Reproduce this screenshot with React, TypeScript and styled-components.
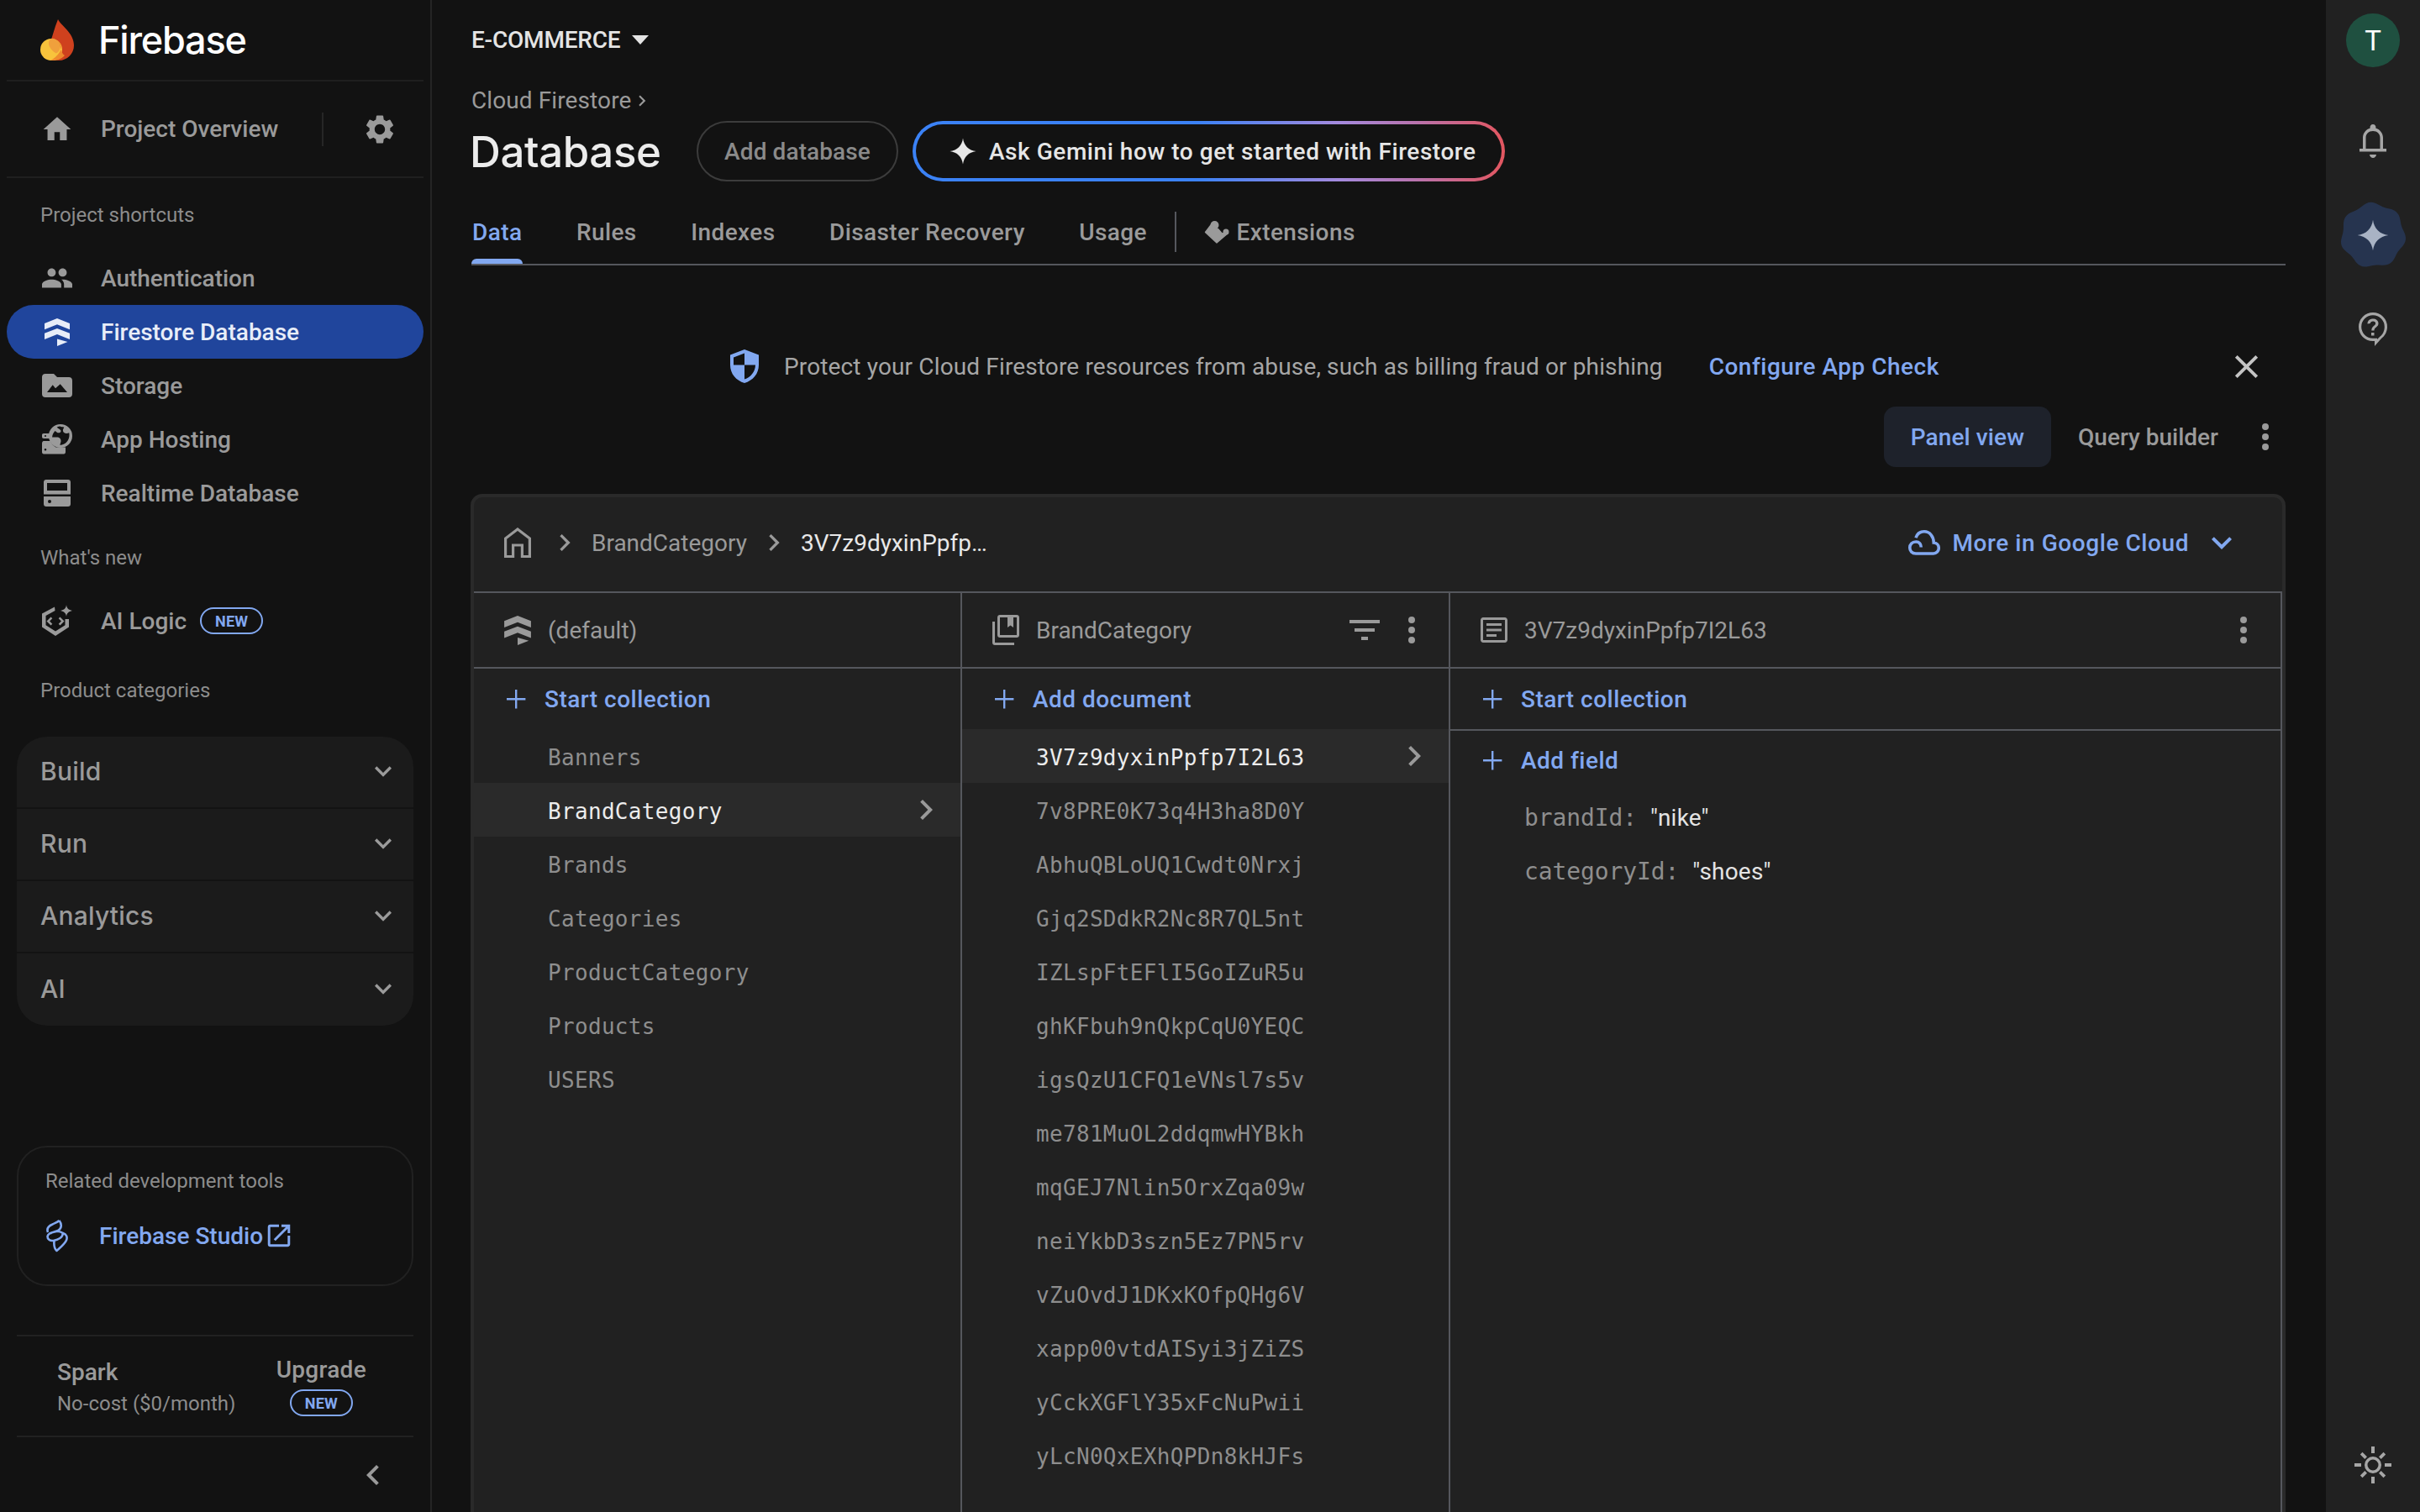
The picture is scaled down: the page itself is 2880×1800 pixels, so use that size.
import styled, { createGlobalStyle } from "styled-components";

const GlobalStyle = createGlobalStyle`
    html, body {
        margin: 0;
        padding: 0;
        background: #121212;
    }
    * {
        box-sizing: border-box;
    }
    body {
        font-family: Roboto, "Liberation Sans", sans-serif;
    }
`;

const BLUE = "#82a8f0";
const GREY = "#9a9a9a";
const LINE = "#55575d";
const MONO = `"DejaVu Sans Mono", "Liberation Mono", monospace`;

const Page = styled.div`
    display: flex;
    width: 2880px;
    height: 1800px;
    overflow: hidden;
    background: #121212;
`;

const Svg = styled.svg<{ $w: number; $h?: number; $c?: string }>`
    display: block;
    flex: none;
    width: ${(p) => p.$w}px;
    height: ${(p) => p.$h ?? p.$w}px;
    color: ${(p) => p.$c ?? GREY};
    fill: currentColor;
`;

/* sidebar */
const Sidebar = styled.aside`
    display: flex;
    flex-direction: column;
    flex: none;
    width: 514px;
    height: 100%;
    border-right: 2px solid #242424;
`;

const LogoRow = styled.div`
    display: flex;
    align-items: center;
    gap: 29px;
    height: 97px;
    margin: 0 8px;
    padding-left: 40px;
    border-bottom: 2px solid #1f1f1f;
`;

const LogoText = styled.span`
    font-family: Inter, sans-serif;
    font-size: 45px;
    font-weight: 500;
    letter-spacing: -1.2px;
    color: #fff;
`;

const OverviewRow = styled.div`
    display: flex;
    align-items: center;
    height: 115px;
    margin: 0 8px;
    padding-left: 42px;
    border-bottom: 2px solid #1f1f1f;
`;

const OverviewText = styled.span`
    width: 263px;
    margin-left: 34px;
    font-size: 28px;
    font-weight: 500;
    color: ${GREY};
`;

const VSep = styled.div`
    width: 2px;
    height: 40px;
    background: #262626;
`;

const GearBox = styled.div`
    margin-left: 49px;
`;

const SectionLabel = styled.div<{ $h: number }>`
    display: flex;
    align-items: center;
    flex: none;
    height: ${(p) => p.$h}px;
    padding-left: 48px;
    font-size: 24px;
    color: #8c8c8c;
`;

const NavRow = styled.div<{ $active?: boolean; $h?: number }>`
    display: flex;
    align-items: center;
    gap: 34px;
    flex: none;
    height: ${(p) => p.$h ?? 64}px;
    margin: 0 8px;
    padding-left: 42px;
    border-radius: 32px;
    background: ${(p) => (p.$active ? "#20459c" : "transparent")};
    color: ${(p) => (p.$active ? "#e8edf8" : GREY)};
    font-size: 28px;
    font-weight: 500;
`;

const NavIcon = styled.span`
    display: flex;
    align-items: center;
    justify-content: center;
    flex: none;
    width: 36px;
`;

const NewBadge = styled.span`
    display: flex;
    align-items: center;
    justify-content: center;
    width: 75px;
    height: 32px;
    border: 2px solid ${BLUE};
    border-radius: 16px;
    color: ${BLUE};
    font-size: 18px;
    font-weight: 700;
    letter-spacing: 0.2px;
`;

const AiRowLabel = styled.span`
    display: flex;
    align-items: center;
    gap: 16px;
`;

const Accordion = styled.div`
    flex: none;
    margin: 2px 20px 0;
    border-radius: 36px;
    background: #1b1b1b;
    overflow: hidden;
`;

const AccordionRow = styled.div`
    display: flex;
    align-items: center;
    justify-content: space-between;
    height: 86px;
    padding: 0 16px 3px 28px;
    border-bottom: 2px solid #131313;
    font-family: Inter, sans-serif;
    font-size: 30px;
    font-weight: 500;
    letter-spacing: 0.2px;
    color: ${GREY};
    &:last-child {
        border-bottom: 0;
    }
`;

const ToolsCard = styled.div`
    display: flex;
    flex-direction: column;
    flex: none;
    height: 167px;
    margin: auto 20px 58px;
    padding: 25px 32px 0;
    border: 2px solid #212121;
    border-radius: 36px;
`;

const ToolsLabel = styled.div`
    font-size: 24px;
    line-height: 30px;
    color: #8c8c8c;
`;

const ToolsLink = styled.div`
    display: flex;
    align-items: center;
    margin-top: 30px;
    color: ${BLUE};
    font-size: 28px;
    font-weight: 500;
`;

const StudioText = styled.span`
    margin: 0 5px 0 36px;
`;

const PlanRow = styled.div`
    display: flex;
    justify-content: space-between;
    flex: none;
    height: 122px;
    margin: 0 20px;
    padding: 21px 56px 0 48px;
    border-top: 2px solid #212121;
    border-bottom: 2px solid #212121;
`;

const PlanName = styled.div`
    margin-top: 2px;
    font-size: 28px;
    line-height: 40px;
    font-weight: 500;
    color: ${GREY};
`;

const PlanCost = styled.div`
    font-size: 24px;
    line-height: 34px;
    color: #8c8c8c;
`;

const UpgradeBox = styled.div`
    display: flex;
    flex-direction: column;
    align-items: center;
    gap: 5px;
    margin-top: 1px;
`;

const UpgradeText = styled.div`
    font-size: 28px;
    line-height: 36px;
    font-weight: 500;
    letter-spacing: 0.3px;
    color: ${GREY};
`;

const CollapseRow = styled.div`
    display: flex;
    justify-content: flex-end;
    align-items: center;
    flex: none;
    height: 89px;
    padding-right: 44px;
`;

/* main */
const Main = styled.main`
    display: flex;
    flex-direction: column;
    flex: 1;
    min-width: 0;
    height: 100%;
    padding: 0 48px 0 47px;
`;

const ProjectRow = styled.div`
    display: flex;
    align-items: center;
    gap: 14px;
    flex: none;
    height: 95px;
    font-size: 28px;
    font-weight: 500;
    letter-spacing: -0.2px;
    color: #e4e4e4;
`;

const Caret = styled.span`
    width: 0;
    height: 0;
    border-left: 10px solid transparent;
    border-right: 10px solid transparent;
    border-top: 11px solid #e4e4e4;
`;

const Crumb = styled.div`
    display: flex;
    align-items: center;
    flex: none;
    height: 49px;
    font-size: 28px;
    letter-spacing: 0.1px;
    color: ${GREY};
`;

const TitleRow = styled.div`
    display: flex;
    align-items: center;
    flex: none;
    height: 72px;
`;

const Title = styled.h1`
    width: 268px;
    margin: 0 0 0 -2px;
    font-family: Inter, sans-serif;
    font-size: 51px;
    font-weight: 500;
    letter-spacing: -0.4px;
    color: #ececec;
`;

const OutlineButton = styled.div`
    display: flex;
    align-items: center;
    justify-content: center;
    width: 240px;
    height: 72px;
    margin-left: 2px;
    border: 2px solid #3c3c3c;
    border-radius: 36px;
    font-size: 28px;
    font-weight: 500;
    letter-spacing: 0.1px;
    color: #8a8a8a;
`;

const GeminiButton = styled.div`
    display: flex;
    align-items: center;
    gap: 14px;
    height: 72px;
    width: 705px;
    margin-left: 17px;
    padding-left: 39px;
    border: 4px solid transparent;
    border-radius: 36px;
    background:
        linear-gradient(#121212, #121212) padding-box,
        linear-gradient(90deg, #3b82f6 0%, #3b82f6 48%, #a48add 72%, #b873ad 85%, #e3565f 100%) border-box;
    font-size: 28px;
    font-weight: 500;
    letter-spacing: 0.55px;
    color: #e6e6e6;
`;

const TabBar = styled.div`
    display: flex;
    align-items: flex-end;
    flex: none;
    height: 100px;
    border-bottom: 2px solid ${LINE};
`;

const Tab = styled.div<{ $active?: boolean }>`
    position: relative;
    display: flex;
    align-items: center;
    gap: 8px;
    height: 76px;
    padding: 0 1px;
    margin-right: 62.5px;
    font-size: 28px;
    font-weight: 500;
    letter-spacing: 0.4px;
    color: ${(p) => (p.$active ? BLUE : GREY)};
    &::after {
        content: "";
        display: ${(p) => (p.$active ? "block" : "none")};
        position: absolute;
        left: 0;
        right: 0;
        bottom: 0;
        height: 6px;
        border-radius: 6px 6px 0 0;
        background: ${BLUE};
    }
`;

const TabSep = styled.div`
    width: 2px;
    height: 48px;
    margin: 0 32px 14px -30px;
    background: ${LINE};
`;

const Banner = styled.div`
    display: flex;
    align-items: center;
    flex: none;
    height: 80px;
    margin-top: 80px;
    padding: 0 29px 0 308px;
    font-size: 28px;
    letter-spacing: 0.14px;
    color: #a6a6a6;
`;

const BannerText = styled.span`
    margin-left: 30px;
`;

const BannerLink = styled.span`
    margin-left: 55px;
    font-weight: 500;
    letter-spacing: 0.5px;
    color: ${BLUE};
`;

const BannerClose = styled.div`
    margin-left: auto;
`;

const Toolbar = styled.div`
    display: flex;
    justify-content: flex-end;
    align-items: center;
    flex: none;
    height: 72px;
    margin-top: 8px;
`;

const ViewButton = styled.div<{ $active?: boolean }>`
    display: flex;
    align-items: center;
    height: 72px;
    padding: 0 32px;
    border-radius: 14px;
    background: ${(p) => (p.$active ? "#1e222b" : "transparent")};
    color: ${(p) => (p.$active ? BLUE : GREY)};
    font-size: 28px;
    font-weight: 500;
    letter-spacing: ${(p) => (p.$active ? "0.1px" : "0")};
`;

const Card = styled.section`
    display: flex;
    flex-direction: column;
    flex: 1;
    min-height: 0;
    margin: 32px 0 0 -1px;
    border: 4px solid #2a2a2a;
    border-bottom: 0;
    border-radius: 14px 14px 0 0;
    background: #212121;
`;

const CardBar = styled.div`
    display: flex;
    align-items: center;
    flex: none;
    height: 114px;
    padding: 0 48px 4px 36px;
    border-bottom: 2px solid ${LINE};
`;

const BarCrumb = styled.span<{ $current?: boolean }>`
    font-size: 28px;
    color: ${(p) => (p.$current ? "#e8e8e8" : GREY)};
`;

const BarChevron = styled.span`
    margin: 0 12px;
    &:first-of-type {
        margin-left: 20px;
    }
`;

const CloudLink = styled.div`
    display: flex;
    align-items: center;
    margin-left: auto;
    color: ${BLUE};
    font-size: 28px;
    font-weight: 500;
    letter-spacing: 0.57px;
`;

const CloudText = styled.span`
    margin: 0 15px 0 14px;
`;

const Columns = styled.div`
    display: grid;
    grid-template-columns: 581px 581px 1fr;
    flex: 1;
    min-height: 0;
    border-right: 2px solid ${LINE};
`;

const Column = styled.div`
    display: flex;
    flex-direction: column;
    min-width: 0;
    border-right: 2px solid ${LINE};
    &:last-child {
        border-right: 0;
    }
`;

const ColHeader = styled.div`
    display: flex;
    align-items: center;
    gap: 20px;
    flex: none;
    height: 90px;
    padding: 0 20px 0 36px;
    border-bottom: 2px solid ${LINE};
    font-size: 28px;
    color: ${GREY};
`;

const HeaderActions = styled.div`
    display: flex;
    gap: 8px;
    margin-left: auto;
`;

const ActionRow = styled.div<{ $line?: boolean; $h: number }>`
    display: flex;
    align-items: center;
    gap: 20px;
    flex: none;
    height: ${(p) => p.$h}px;
    padding-left: 36px;
    border-bottom: ${(p) => (p.$line ? `2px solid ${LINE}` : "0")};
    color: ${BLUE};
    font-size: 28px;
    font-weight: 500;
    letter-spacing: 0.48px;
`;

const DocRow = styled.div<{ $active?: boolean }>`
    display: flex;
    align-items: center;
    justify-content: space-between;
    flex: none;
    height: 64px;
    padding: 4px 17px 0 88px;
    background: ${(p) => (p.$active ? "#2a2a2a" : "transparent")};
    color: ${(p) => (p.$active ? "#ececec" : "#8e8e8e")};
    font-family: ${MONO};
    font-size: 26px;
    letter-spacing: 0.32px;
`;

const RowChevron = styled.span`
    margin-top: -4px;
`;

const FieldRow = styled.div`
    display: flex;
    align-items: center;
    gap: 16px;
    flex: none;
    height: 64px;
    padding-left: 88px;
`;

const FieldKey = styled.span`
    font-family: ${MONO};
    font-size: 28px;
    letter-spacing: -0.1px;
    color: #8e8e8e;
`;

const FieldValue = styled.span`
    font-size: 28px;
    letter-spacing: 0.2px;
    color: #e4e4e4;
`;

const FieldSpacer = styled.div`
    flex: none;
    height: 1px;
`;

/* right rail */
const Rail = styled.aside`
    display: flex;
    flex-direction: column;
    align-items: center;
    flex: none;
    width: 112px;
    height: 100%;
    background: #212121;
`;

const Avatar = styled.div`
    display: flex;
    align-items: center;
    justify-content: center;
    width: 64px;
    height: 64px;
    margin: 16px 0 32px;
    border-radius: 50%;
    background: #1f5040;
    color: #fff;
    font-size: 33px;
`;

const RailCell = styled.div<{ $bottom?: boolean }>`
    display: flex;
    align-items: center;
    justify-content: center;
    width: 112px;
    height: 112px;
    margin-top: ${(p) => (p.$bottom ? "auto" : "0")};
`;

const GeminiBadge = styled.div`
    position: relative;
    display: flex;
    align-items: center;
    justify-content: center;
    width: 80px;
    height: 80px;
`;

const BlobLayer = styled.div`
    position: absolute;
    inset: 0;
`;

const StarLayer = styled.div`
    position: relative;
`;

const paths = {
    home: "M10 20v-6h4v6h5v-8h3L12 3 2 12h3v8z",
    gear: "M19.14 12.94c.04-.3.06-.61.06-.94 0-.32-.02-.64-.07-.94l2.03-1.58a.49.49 0 0 0 .12-.61l-1.92-3.32a.488.488 0 0 0-.59-.22l-2.39.96c-.5-.38-1.03-.7-1.62-.94l-.36-2.54a.484.484 0 0 0-.48-.41h-3.84c-.24 0-.43.17-.47.41l-.36 2.54c-.59.24-1.13.57-1.62.94l-2.39-.96c-.22-.08-.47 0-.59.22L2.74 8.87c-.12.21-.08.47.12.61l2.03 1.58c-.05.3-.09.63-.09.94s.02.64.07.94l-2.03 1.58a.49.49 0 0 0-.12.61l1.92 3.32c.12.22.37.29.59.22l2.39-.96c.5.38 1.03.7 1.62.94l.36 2.54c.05.24.24.41.48.41h3.84c.24 0 .44-.17.47-.41l.36-2.54c.59-.24 1.13-.56 1.62-.94l2.39.96c.22.08.47 0 .59-.22l1.92-3.32c.12-.22.07-.47-.12-.61l-2.01-1.58zM12 15.6c-1.98 0-3.6-1.62-3.6-3.6s1.62-3.6 3.6-3.6 3.6 1.62 3.6 3.6-1.62 3.6-3.6 3.6z",
    people: "M16 11c1.66 0 2.99-1.34 2.99-3S17.66 5 16 5s-3 1.34-3 3 1.34 3 3 3zm-8 0c1.66 0 2.99-1.34 2.99-3S9.66 5 8 5 5 6.34 5 8s1.34 3 3 3zm0 2c-2.33 0-7 1.17-7 3.5V19h14v-2.5C15 14.17 10.33 13 8 13zm8 0c-.29 0-.62.02-.97.05 1.16.84 1.97 1.97 1.97 3.45V19h6v-2.5c0-2.33-4.67-3.5-7-3.5z",
    down: "M16.59 8.59 12 13.17 7.41 8.59 6 10l6 6 6-6z",
    right: "M10 6 8.59 7.41 13.17 12l-4.58 4.59L10 18l6-6z",
    left: "M15.41 7.41 14 6l-6 6 6 6 1.41-1.41L10.83 12z",
    external: "M19 19H5V5h7V3H5a2 2 0 0 0-2 2v14a2 2 0 0 0 2 2h14c1.100 0 2-.9 2-2v-7h-2v7zM14 3v2h3.590l-9.830 9.830 1.410 1.410L19 6.410V10h2V3h-7z",
    close: "M19 6.410 17.590 5 12 10.590 6.410 5 5 6.410 10.590 12 5 17.590 6.410 19 12 13.410 17.590 19 19 17.590 13.410 12z",
    kebab: "M12 8a2 2 0 1 0 0-4 2 2 0 0 0 0 4zm0 2a2 2 0 1 0 0 4 2 2 0 0 0 0-4zm0 6a2 2 0 1 0 0 4 2 2 0 0 0 0-4z",
    filter: "M10 18h4v-2h-4v2zM3 6v2h18V6H3zm3 7h12v-2H6v2z",
    spark: "M12 1c.8 6.200 4.800 10.200 11 11-6.200.8-10.200 4.800-11 11-.8-6.200-4.800-10.200-11-11 6.200-.8 10.200-4.800 11-11z",
};

const Glyph = ({ d, w, h, c, vb }: { d: string; w: number; h?: number; c?: string; vb?: string }) => (
    <Svg $w={w} $h={h} $c={c} viewBox={vb ?? "0 0 24 24"} aria-hidden="true">
        <path d={d} fillRule="evenodd" />
    </Svg>
);

const FirebaseLogo = () => (
    <Svg $w={40} $h={49} viewBox="0 0 40 49">
        <path d="M21 0c3 7 19 16 19 31 0 10-8 18-18 18-7 0-12-3-14-9L18 8z" fill="#cf411e" />
        <circle cx="13" cy="36" r="13" fill="#f8c33c" />
        <path d="M19 24.500c5 2.500 8 8.500 4 14.500-3 4.500-7 8-11 10 7 1 14-2 17-6-5-3-4-11-10-18.500z" fill="#ee8a2c" />
        <path d="M13 23c4-1 9.500 3 10.500 8 .7 4-1.500 8-4.500 9.500-5-2.500-9-7.500-9-12 0-2.500 1-4.500 3-5.500z" fill="#f0a03c" />
    </Svg>
);

const FirestoreIcon = ({ w, h, c }: { w: number; h: number; c: string }) => (
    <Svg $w={w} $h={h} $c={c} viewBox="0 0 30 33">
        <path d="M15 0l15 6v7.300L15 7.200 0 13.300V6z" />
        <path d="M15 12l15 5.700V25l-15-6-15 6v-7.300z" />
        <path d="M15 24.500l12.500 3.500L15 33z" />
    </Svg>
);

const FolderIcon = () => (
    <Svg $w={36} $h={28} viewBox="0 0 36 28">
        <path
            fillRule="evenodd"
            d="M4 0h10l4 4h14c2.500 0 4 1.500 4 4v16c0 2.500-1.500 4-4 4H4c-2.500 0-4-1.500-4-4V4c0-2.500 1.500-4 4-4zM6 22h24l-8.300-9.700-5.700 5-3.300-4z"
        />
    </Svg>
);

const PuzzleIcon = () => (
    <Svg $w={30} $h={27} viewBox="0 0 30 27">
        <circle cx="12.500" cy="5" r="5" />
        <circle cx="26" cy="13" r="3.500" />
        <path
            stroke="currentColor"
            strokeWidth="1.400"
            strokeLinejoin="round"
            d="M1.500 13.500L8 5l8.500 4.500 4.800 5.500 4.700-1 2.500.5L15 26z"
        />
    </Svg>
);

const HostingIcon = () => (
    <Svg $w={38} $h={36} viewBox="0 0 38 36">
        <path fillRule="evenodd" d="M23 0a14 14 0 1 1 0 28 14 14 0 0 1 0-28zM23 2.500c-1.500 0-3 .3-4.300 .9 1 1.600 3 2 4.300 3.600 1 1.200 .2 3-1.500 3.300-2 .4-3.500-1-5-2.300-2 2-3.300 4.800-3.400 7.500h5.400c3.500 0 5 2 5 4.500 0 1.800-1 2.900-1 4.900 6.200-.4 11-5.500 11-11.900 0-1-.1-1.900-.3-2.800-3 1.600-7.300 .6-7.300-2.700 0-1.500 1-2.600 1.300-3.900-1.300-.4-2.800-.6-4.200-.6z" />
        <path fillRule="evenodd" d="M3 11h9c-1 2-1.400 3.700-1.500 6H3c-1.300 0-2-.8-2-2v-2c0-1.200.7-2 2-2zM5 13a1 1 0 1 0 0 2 1 1 0 0 0 0-2z" />
        <path fillRule="evenodd" d="M3 20h8c1 3 3.500 6 6.500 7.500H29v5.500c0 1.500-.8 2.500-2 2.500H3c-1.300 0-2-1-2-2.500v-10c0-1.500.7-3 2-3zM5 29a1.300 1.300 0 1 0 0 2.600 1.300 1.300 0 0 0 0-2.600z" />
    </Svg>
);

const ServerIcon = () => (
    <Svg $w={32} $h={32} viewBox="0 0 32 32">
        <path fillRule="evenodd" d="M3 0h26c1.800 0 3 1.200 3 3v14.500H0V3c0-1.800 1.200-3 3-3zM4 4v9h24V4z" />
        <path fillRule="evenodd" d="M0 20h32v9c0 1.800-1.200 3-3 3H3c-1.800 0-3-1.200-3-3zM7 24a2 2 0 1 0 0 4 2 2 0 0 0 0-4z" />
    </Svg>
);

const AiLogicIcon = () => (
    <Svg $w={36} $h={38} viewBox="0 0 36 38">
        <path d="M15 2.500L0 10.500v16L16 37l16-10.500V17h-4.500v7.300L16 31.500 4.500 24.300V13l11-6z" />
        <path d="M10.500 14.500l-5 5 5 5 1.800-1.800-3.200-3.200 3.200-3.200zM21.500 14.500l5 5-5 5-1.800-1.800 3.200-3.200-3.200-3.200z" />
        <path d="M29 0c.5 4 2.500 6 7 7-4.500 1-6.500 3-7 7-.5-4-2.500-6-7-7 4.500-1 6.500-3 7-7z" />
    </Svg>
);

const StudioIcon = () => (
    <Svg $w={28} $h={40} $c={BLUE} viewBox="0 0 28 40">
        <path
            fill="none"
            stroke="currentColor"
            strokeWidth="2.600"
            strokeLinejoin="round"
            d="M16.500 2c3 4 3.500 9-1.500 12-5 2.500-12 2-12.500 7 0 3 2.500 5.500 7 5 6-.8 11-4 11.500-9-4-2.500-10-3-15 .5M3 16C1 11 5 8 8.500 6.500 11.500 5 14.500 4 16.500 2M21 17c4 1 5.500 5 4 8.500C23 30 18 34 13.500 38c-3-3-3.500-7-3-11.500"
        />
    </Svg>
);

const ShieldIcon = () => (
    <Svg $w={34} $h={40} $c={BLUE} viewBox="0 0 34 40">
        <path
            fillRule="evenodd"
            d="M17 0l17 6.500v12C34 29 27 37 17 40 7 37 0 29 0 18.500v-12zM17 4.500L4 9.500v9h13zM17 18.500v17c7.500-2.500 12.800-9 13-17z"
        />
    </Svg>
);

const OutlineHome = () => (
    <Svg $w={32} $h={36} $c={GREY} viewBox="0 0 32 36">
        <path
            fill="none"
            stroke="currentColor"
            strokeWidth="3.200"
            d="M1.600 34.500V13L16 2l14.400 11v21.500h-9V21H10.600v13.500z"
        />
    </Svg>
);

const CollectionIcon = () => (
    <Svg $w={32} $h={36} viewBox="0 0 32 36">
        <path
            fillRule="evenodd"
            d="M9 0h20c1.700 0 3 1.300 3 3v21c0 1.700-1.300 3-3 3H9c-1.700 0-3-1.300-3-3V3c0-1.700 1.300-3 3-3zM9 3v21h20V3h-4v12l-3.500-2.500L18 15V3z"
        />
        <path d="M0 8h3v25h23v3H3c-1.700 0-3-1.300-3-3z" />
    </Svg>
);

const DocIcon = () => (
    <Svg $w={32} $h={32} viewBox="0 0 32 32">
        <path
            fillRule="evenodd"
            d="M3 1h26c1.500 0 3 1.500 3 3v24c0 1.500-1.500 3-3 3H3c-1.500 0-3-1.500-3-3V4c0-1.500 1.500-3 3-3zm0 3v24h26V4zM7 8h18v3H7zm0 6.500h18v3H7zM7 21h12v3H7z"
        />
    </Svg>
);

const CloudIcon = () => (
    <Svg $w={38} $h={30} $c={BLUE} viewBox="0 0 38 30">
        <path
            fill="none"
            stroke="currentColor"
            strokeWidth="3.600"
            d="M9 28C4.500 28 1.800 25 1.800 21c0-4 3-7 7-7 4-.5 6.500 3 6.500 6.500M9 28h21c3.500 0 6.300-3 6.300-6.500 0-3.500-2.700-6.300-6-6.500 0-7-4.500-13.200-11.300-13.200-5 0-8.500 3-10 7.500"
        />
    </Svg>
);

const PlusIcon = () => (
    <Svg $w={28} $h={28} $c={BLUE} viewBox="0 0 28 28">
        <path d="M13 3h2.400v10h10v2.400h-10v10H13v-10H3V13h10z" />
    </Svg>
);

const BellIcon = () => (
    <Svg $w={32} $h={40} $c="#a6a6a6" viewBox="0 0 32 40">
        <path d="M16 0a3.500 3.500 0 0 1 3.300 4.600C24 6 28 10.500 28 16v13h4v3.500H0V29h4V16c0-5.500 4-10 8.700-11.400A3.500 3.500 0 0 1 16 0zM16 8c-5 0-8.500 3.500-8.500 8v13h17V16c0-4.500-3.500-8-8.500-8z" fillRule="evenodd" />
        <path d="M12 36h8c0 2-2 4-4 4s-4-2-4-4z" />
    </Svg>
);

const HelpIcon = () => (
    <Svg $w={34} $h={40} $c="#a6a6a6" viewBox="0 0 34 40">
        <path
            fillRule="evenodd"
            d="M17 0a17 17 0 0 1 17 17c0 6-3 11-7 14l-8 9v-6.100C8 35 0 27 0 17A17 17 0 0 1 17 0zm0 3.200A13.800 13.800 0 0 0 3.200 17c0 7.600 6.200 13.800 13.800 13.800h5V32l3-3c3.600-2.500 5.800-7 5.800-12A13.800 13.800 0 0 0 17 3.200z"
        />
        <path d="M10.500 13.500c0-4 3-6 6.500-6s6.500 2 6.500 5.500c0 4.500-5 4.500-5 8.500h-3.200c0-5.500 4.800-5.500 4.800-8.500 0-1.500-1-2.600-3-2.600s-3 1.200-3.300 2.600zM15 24h3.500v3.500H15z" />
    </Svg>
);

const SunIcon = () => (
    <Svg $w={44} $h={44} $c="#a6a6a6" viewBox="0 0 44 44">
        <path fillRule="evenodd" d="M22 12a10 10 0 1 1 0 20 10 10 0 0 1 0-20zm0 3.500a6.500 6.500 0 1 0 0 13 6.500 6.500 0 0 0 0-13z" />
        <path d="M20 0h4v8h-4zM20 36h4v8h-4zM0 20h8v4H0zM36 20h8v4h-8zM6.800 9.500l2.700-2.700 5.500 5.500-2.700 2.700zM29 31.700l2.700-2.700 5.500 5.500-2.700 2.700zM34.500 6.800l2.700 2.700-5.500 5.500-2.700-2.700zM12.300 29l2.700 2.700-5.500 5.500-2.700-2.700z" />
    </Svg>
);

// wavy badge behind the gemini star
const blobPath = Array.from({ length: 96 }, (_, i) => {
    const a = (i / 96) * Math.PI * 2;
    const r = 37.5 + 1.8 * Math.sin(a * 7 + 0.6);
    const x = 40 + r * Math.cos(a);
    const y = 40 + r * Math.sin(a);
    return `${i === 0 ? "M" : "L"}${x.toFixed(2)} ${y.toFixed(2)}`;
}).join(" ");

const collections = ["Banners", "BrandCategory", "Brands", "Categories", "ProductCategory", "Products", "USERS"];

const documents = [
    "3V7z9dyxinPpfp7I2L63",
    "7v8PRE0K73q4H3ha8D0Y",
    "AbhuQBLoUQ1Cwdt0Nrxj",
    "Gjq2SDdkR2Nc8R7QL5nt",
    "IZLspFtEFlI5GoIZuR5u",
    "ghKFbuh9nQkpCqU0YEQC",
    "igsQzU1CFQ1eVNsl7s5v",
    "me781MuOL2ddqmwHYBkh",
    "mqGEJ7Nlin5OrxZqa09w",
    "neiYkbD3szn5Ez7PN5rv",
    "vZuOvdJ1DKxKOfpQHg6V",
    "xapp00vtdAISyi3jZiZS",
    "yCckXGFlY35xFcNuPwii",
    "yLcN0QxEXhQPDn8kHJFs",
];

export default function App() {
    return (
        <Page>
            <GlobalStyle />
            <Sidebar>
                <LogoRow>
                    <FirebaseLogo />
                    <LogoText>Firebase</LogoText>
                </LogoRow>
                <OverviewRow>
                    <Glyph d={paths.home} w={36} vb="1 1 22 22" />
                    <OverviewText>Project Overview</OverviewText>
                    <VSep />
                    <GearBox>
                        <Glyph d={paths.gear} w={36} vb="1.500 1.500 21 21" />
                    </GearBox>
                </OverviewRow>
                <SectionLabel $h={87}>Project shortcuts</SectionLabel>
                <NavRow>
                    <NavIcon>
                        <Glyph d={paths.people} w={36} vb="1 1 22 22" />
                    </NavIcon>
                    Authentication
                </NavRow>
                <NavRow $active>
                    <NavIcon>
                        <FirestoreIcon w={30} h={33} c="#e8edf8" />
                    </NavIcon>
                    Firestore Database
                </NavRow>
                <NavRow>
                    <NavIcon>
                        <FolderIcon />
                    </NavIcon>
                    Storage
                </NavRow>
                <NavRow>
                    <NavIcon>
                        <HostingIcon />
                    </NavIcon>
                    App Hosting
                </NavRow>
                <NavRow>
                    <NavIcon>
                        <ServerIcon />
                    </NavIcon>
                    Realtime Database
                </NavRow>
                <SectionLabel $h={90}>What's new</SectionLabel>
                <NavRow $h={60}>
                    <NavIcon>
                        <AiLogicIcon />
                    </NavIcon>
                    <AiRowLabel>
                        AI Logic
                        <NewBadge>NEW</NewBadge>
                    </AiRowLabel>
                </NavRow>
                <SectionLabel $h={106}>Product categories</SectionLabel>
                <Accordion>
                    {["Build", "Run", "Analytics", "AI"].map((name) => (
                        <AccordionRow key={name}>
                            {name}
                            <Glyph d={paths.down} w={40} />
                        </AccordionRow>
                    ))}
                </Accordion>
                <ToolsCard>
                    <ToolsLabel>Related development tools</ToolsLabel>
                    <ToolsLink>
                        <StudioIcon />
                        <StudioText>Firebase Studio</StudioText>
                        <Glyph d={paths.external} w={28} c={BLUE} vb="2.500 2.500 19 19" />
                    </ToolsLink>
                </ToolsCard>
                <PlanRow>
                    <div>
                        <PlanName>Spark</PlanName>
                        <PlanCost>No-cost ($0/month)</PlanCost>
                    </div>
                    <UpgradeBox>
                        <UpgradeText>Upgrade</UpgradeText>
                        <NewBadge>NEW</NewBadge>
                    </UpgradeBox>
                </PlanRow>
                <CollapseRow>
                    <Glyph d={paths.left} w={48} />
                </CollapseRow>
            </Sidebar>
            <Main>
                <ProjectRow>
                    E-COMMERCE
                    <Caret />
                </ProjectRow>
                <Crumb>
                    Cloud Firestore
                    <Glyph d={paths.right} w={26} />
                </Crumb>
                <TitleRow>
                    <Title>Database</Title>
                    <OutlineButton>Add database</OutlineButton>
                    <GeminiButton>
                        <Glyph d={paths.spark} w={34} c="#e8e8e8" />
                        Ask Gemini how to get started with Firestore
                    </GeminiButton>
                </TitleRow>
                <TabBar>
                    <Tab $active>Data</Tab>
                    <Tab>Rules</Tab>
                    <Tab>Indexes</Tab>
                    <Tab>Disaster Recovery</Tab>
                    <Tab>Usage</Tab>
                    <TabSep />
                    <Tab>
                        <PuzzleIcon />
                        Extensions
                    </Tab>
                </TabBar>
                <Banner>
                    <ShieldIcon />
                    <BannerText>Protect your Cloud Firestore resources from abuse, such as billing fraud or phishing</BannerText>
                    <BannerLink>Configure App Check</BannerLink>
                    <BannerClose>
                        <Glyph d={paths.close} w={35} c="#c4c4c4" vb="3 3 18 18" />
                    </BannerClose>
                </Banner>
                <Toolbar>
                    <ViewButton $active>Panel view</ViewButton>
                    <ViewButton>Query builder</ViewButton>
                    <Glyph d={paths.kebab} w={48} />
                </Toolbar>
                <Card>
                    <CardBar>
                        <OutlineHome />
                        <BarChevron>
                            <Glyph d={paths.right} w={40} />
                        </BarChevron>
                        <BarCrumb>BrandCategory</BarCrumb>
                        <BarChevron>
                            <Glyph d={paths.right} w={40} />
                        </BarChevron>
                        <BarCrumb $current>3V7z9dyxinPpfp…</BarCrumb>
                        <CloudLink>
                            <CloudIcon />
                            <CloudText>More in Google Cloud</CloudText>
                            <Glyph d={paths.down} w={48} c={BLUE} />
                        </CloudLink>
                    </CardBar>
                    <Columns>
                        <Column>
                            <ColHeader>
                                <FirestoreIcon w={32} h={35} c={GREY} />
                                (default)
                            </ColHeader>
                            <ActionRow $h={72}>
                                <PlusIcon />
                                Start collection
                            </ActionRow>
                            {collections.map((name) => (
                                <DocRow key={name} $active={name === "BrandCategory"}>
                                    {name}
                                    {name === "BrandCategory" && (
                                        <RowChevron>
                                            <Glyph d={paths.right} w={48} />
                                        </RowChevron>
                                    )}
                                </DocRow>
                            ))}
                        </Column>
                        <Column>
                            <ColHeader>
                                <CollectionIcon />
                                BrandCategory
                                <HeaderActions>
                                    <Glyph d={paths.filter} w={48} />
                                    <Glyph d={paths.kebab} w={48} />
                                </HeaderActions>
                            </ColHeader>
                            <ActionRow $h={72}>
                                <PlusIcon />
                                Add document
                            </ActionRow>
                            {documents.map((id, i) => (
                                <DocRow key={id} $active={i === 0}>
                                    {id}
                                    {i === 0 && (
                                        <RowChevron>
                                            <Glyph d={paths.right} w={48} />
                                        </RowChevron>
                                    )}
                                </DocRow>
                            ))}
                        </Column>
                        <Column>
                            <ColHeader>
                                <DocIcon />
                                3V7z9dyxinPpfp7I2L63
                                <HeaderActions>
                                    <Glyph d={paths.kebab} w={48} />
                                </HeaderActions>
                            </ColHeader>
                            <ActionRow $h={74} $line>
                                <PlusIcon />
                                Start collection
                            </ActionRow>
                            <ActionRow $h={70}>
                                <PlusIcon />
                                Add field
                            </ActionRow>
                            <FieldSpacer />
                            <FieldRow>
                                <FieldKey>brandId:</FieldKey>
                                <FieldValue>"nike"</FieldValue>
                            </FieldRow>
                            <FieldRow>
                                <FieldKey>categoryId:</FieldKey>
                                <FieldValue>"shoes"</FieldValue>
                            </FieldRow>
                        </Column>
                    </Columns>
                </Card>
            </Main>
            <Rail>
                <Avatar>T</Avatar>
                <RailCell>
                    <BellIcon />
                </RailCell>
                <RailCell>
                    <GeminiBadge>
                        <BlobLayer>
                            <Svg $w={80} $c="#26344f" viewBox="0 0 80 80">
                                <path d={blobPath} />
                            </Svg>
                        </BlobLayer>
                        <StarLayer>
                            <Glyph d={paths.spark} w={40} c="#a9b3c4" />
                        </StarLayer>
                    </GeminiBadge>
                </RailCell>
                <RailCell>
                    <HelpIcon />
                </RailCell>
                <RailCell $bottom>
                    <SunIcon />
                </RailCell>
            </Rail>
        </Page>
    );
}
